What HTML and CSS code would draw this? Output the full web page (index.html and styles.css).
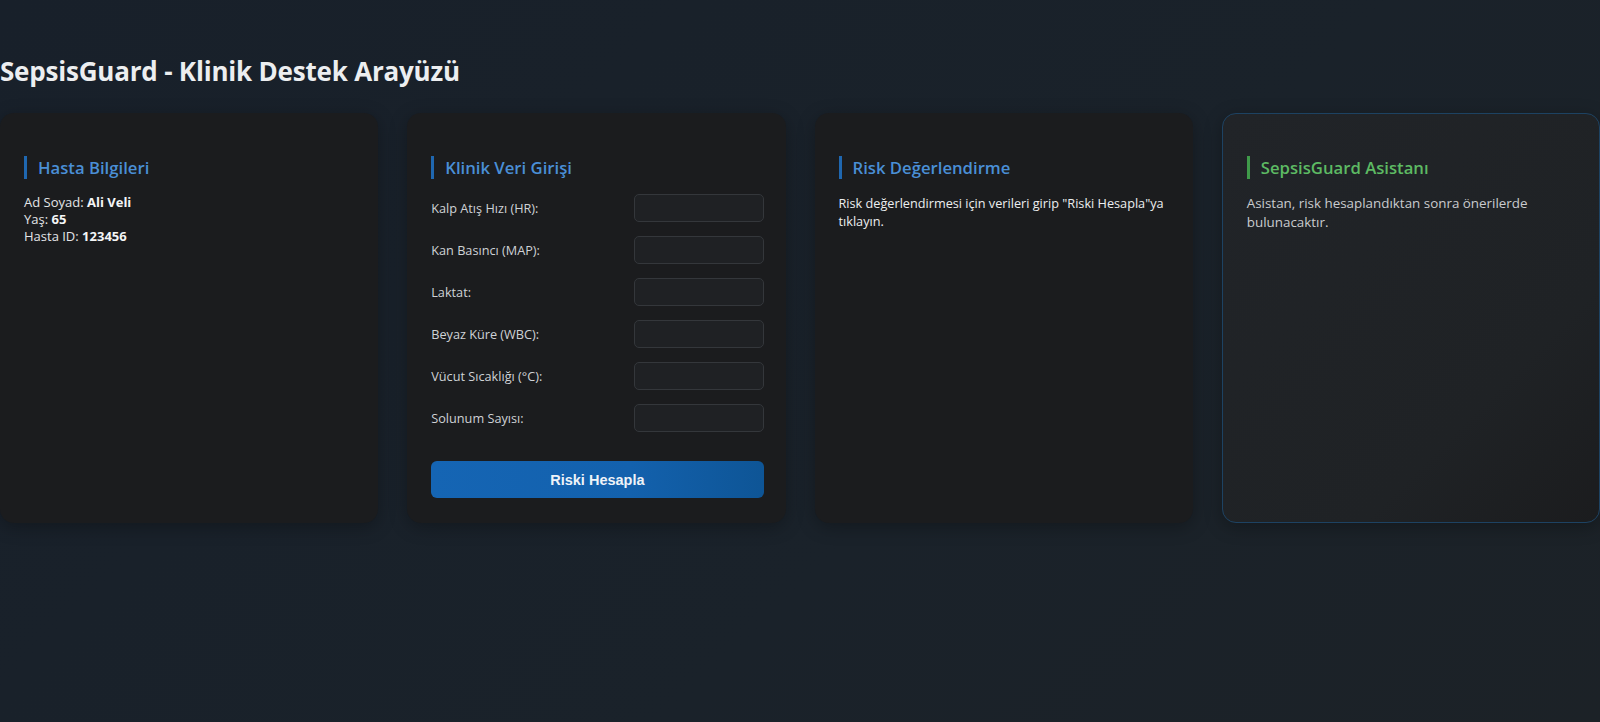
FILE: index.html
```html
<!DOCTYPE html>
<html lang="tr">
<head>
<meta charset="utf-8">
<title>SepsisGuard</title>
<link rel="stylesheet" href="styles.css">
</head>
<body>
<div class="page">
  <h1 class="title">SepsisGuard - Klinik Destek Arayüzü</h1>
  <div class="grid">
    <section class="card">
      <h2 class="card-title">Hasta Bilgileri</h2>
      <div class="info">
        <div>Ad Soyad: <b>Ali Veli</b></div>
        <div>Yaş: <b>65</b></div>
        <div>Hasta ID: <b>123456</b></div>
      </div>
    </section>
    <section class="card">
      <h2 class="card-title">Klinik Veri Girişi</h2>
      <div class="form">
        <div class="row"><label>Kalp Atış Hızı (HR):</label><input class="field" type="text"></div>
        <div class="row"><label>Kan Basıncı (MAP):</label><input class="field" type="text"></div>
        <div class="row"><label>Laktat:</label><input class="field" type="text"></div>
        <div class="row"><label>Beyaz Küre (WBC):</label><input class="field" type="text"></div>
        <div class="row"><label>Vücut Sıcaklığı (°C):</label><input class="field" type="text"></div>
        <div class="row"><label>Solunum Sayısı:</label><input class="field" type="text"></div>
      </div>
      <button class="btn">Riski Hesapla</button>
    </section>
    <section class="card">
      <h2 class="card-title">Risk Değerlendirme</h2>
      <p class="text">Risk değerlendirmesi için verileri girip "Riski Hesapla"ya tıklayın.</p>
    </section>
    <section class="card card-assist">
      <h2 class="card-title green">SepsisGuard Asistanı</h2>
      <p class="text muted">Asistan, risk hesaplandıktan sonra önerilerde bulunacaktır.</p>
    </section>
  </div>
</div>
</body>
</html>
```

FILE: styles.css
```css
html, body {
  margin: 0;
  padding: 0;
  height: 100%;
}
body {
  background: linear-gradient(135deg, #18202a 0%, #1a222a 60%, #1c2227 100%);
  font-family: "Open Sans", "Noto Sans", sans-serif;
  color: #e6e8eb;
  overflow: hidden;
}
.page {
  padding-top: 54px;
}
.title {
  margin: 0 0 25px 0;
  font-size: 26px;
  line-height: 34px;
  font-weight: 700;
  color: #eceef0;
  letter-spacing: -0.2px;
}
.grid {
  display: grid;
  grid-template-columns: repeat(4, 1fr);
  gap: 29px;
}
.card {
  background: #1b1c1e;
  border-radius: 14px;
  padding: 43px 22px 25px 24px;
  min-height: 410px;
  box-sizing: border-box;
  box-shadow: 0 4px 18px rgba(0, 0, 0, 0.28);
  display: flex;
  flex-direction: column;
}
.card-assist {
  background: linear-gradient(135deg, #212428 0%, #1f2225 70%, #1b1c1e 100%);
  border: 1px solid #1d4262;
  padding-top: 42px;
}
.card-title {
  margin: 0 0 15px 0;
  border-left: 3px solid #1f67b0;
  padding-left: 11px;
  font-size: 16.7px;
  line-height: 23px;
  font-weight: 600;
  color: #4a8fd6;
}
.card-title.green {
  border-left-color: #3f9a4a;
  color: #5dba63;
}
.info {
  font-size: 13px;
  line-height: 17px;
  color: #e3e5e8;
}
.info b {
  color: #f4f5f6;
}
.form {
  display: flex;
  flex-direction: column;
  gap: 14px;
}
.row {
  display: flex;
  justify-content: space-between;
  align-items: center;
}
.row label {
  font-size: 12.7px;
  color: #cfd2d6;
}
.field {
  width: 130px;
  height: 28px;
  box-sizing: border-box;
  background: #1f2124;
  border: 1px solid #34373b;
  border-radius: 5px;
  color: #e6e8eb;
}
.btn {
  margin-top: 29px;
  height: 37px;
  border: none;
  border-radius: 6px;
  background: linear-gradient(90deg, #1565b4 0%, #1361ad 60%, #0e5596 100%);
  color: #eef3f8;
  font-family: "Liberation Sans", Arial, sans-serif;
  font-weight: 700;
  font-size: 14.5px;
  width: 100%;
}
.text {
  margin: 0;
  font-size: 12.7px;
  line-height: 18px;
  color: #eceef0;
}
.text.muted {
  font-size: 13.4px;
  line-height: 19px;
  color: #c9cbce;
}
```
